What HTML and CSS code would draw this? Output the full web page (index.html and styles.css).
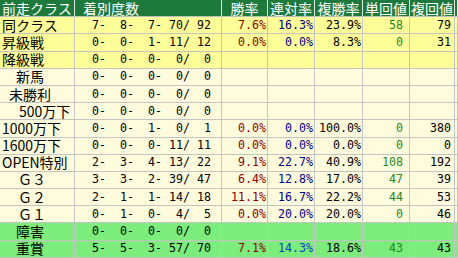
FILE: index.html
```html
<!DOCTYPE html>
<html lang="ja">
<head>
<meta charset="utf-8">
<link rel="stylesheet" href="styles.css">
</head>
<body>
<div class="sheet">
  <div class="row head">
    <div class="c lab">前走クラス</div>
    <div class="c hd-left">着別度数</div>
    <div class="c hd">勝率</div>
    <div class="c hd">連対率</div>
    <div class="c hd">複勝率</div>
    <div class="c hd">単回値</div>
    <div class="c hd">複回値</div>
    <div class="c"></div>
  </div>

  <div class="row yellow">
    <div class="c lab">同クラス</div>
    <div class="c num rec">  7-  8-  7- 70/ 92</div>
    <div class="c num win">7.6%</div>
    <div class="c num ren">16.3%</div>
    <div class="c num fuku">23.9%</div>
    <div class="c num tan">58</div>
    <div class="c num fk">79</div>
    <div class="c"></div>
  </div>
  <div class="row yellow">
    <div class="c lab">昇級戦</div>
    <div class="c num rec">  0-  0-  1- 11/ 12</div>
    <div class="c num win">0.0%</div>
    <div class="c num ren">0.0%</div>
    <div class="c num fuku">8.3%</div>
    <div class="c num tan">0</div>
    <div class="c num fk">31</div>
    <div class="c"></div>
  </div>
  <div class="row yellow">
    <div class="c lab">降級戦</div>
    <div class="c num rec">  0-  0-  0-  0/  0</div>
    <div class="c"></div><div class="c"></div><div class="c"></div><div class="c"></div><div class="c"></div><div class="c"></div>
  </div>

  <div class="row cream">
    <div class="c lab in-full">新馬</div>
    <div class="c num rec">  0-  0-  0-  0/  0</div>
    <div class="c"></div><div class="c"></div><div class="c"></div><div class="c"></div><div class="c"></div><div class="c"></div>
  </div>
  <div class="row cream">
    <div class="c lab in-half">未勝利</div>
    <div class="c num rec">  0-  0-  0-  0/  0</div>
    <div class="c"></div><div class="c"></div><div class="c"></div><div class="c"></div><div class="c"></div><div class="c"></div>
  </div>
  <div class="row cream">
    <div class="c lab in-500">500万下</div>
    <div class="c num rec">  0-  0-  0-  0/  0</div>
    <div class="c"></div><div class="c"></div><div class="c"></div><div class="c"></div><div class="c"></div><div class="c"></div>
  </div>
  <div class="row cream">
    <div class="c lab">1000万下</div>
    <div class="c num rec">  0-  0-  1-  0/  1</div>
    <div class="c num win">0.0%</div>
    <div class="c num ren">0.0%</div>
    <div class="c num fuku">100.0%</div>
    <div class="c num tan">0</div>
    <div class="c num fk">380</div>
    <div class="c"></div>
  </div>
  <div class="row cream">
    <div class="c lab">1600万下</div>
    <div class="c num rec">  0-  0-  0- 11/ 11</div>
    <div class="c num win">0.0%</div>
    <div class="c num ren">0.0%</div>
    <div class="c num fuku">0.0%</div>
    <div class="c num tan">0</div>
    <div class="c num fk">0</div>
    <div class="c"></div>
  </div>
  <div class="row cream">
    <div class="c lab">OPEN特別</div>
    <div class="c num rec">  2-  3-  4- 13/ 22</div>
    <div class="c num win">9.1%</div>
    <div class="c num ren">22.7%</div>
    <div class="c num fuku">40.9%</div>
    <div class="c num tan">108</div>
    <div class="c num fk">192</div>
    <div class="c"></div>
  </div>
  <div class="row cream">
    <div class="c lab in-g">Ｇ３</div>
    <div class="c num rec">  3-  3-  2- 39/ 47</div>
    <div class="c num win">6.4%</div>
    <div class="c num ren">12.8%</div>
    <div class="c num fuku">17.0%</div>
    <div class="c num tan">47</div>
    <div class="c num fk">39</div>
    <div class="c"></div>
  </div>
  <div class="row cream">
    <div class="c lab in-g">Ｇ２</div>
    <div class="c num rec">  2-  1-  1- 14/ 18</div>
    <div class="c num win">11.1%</div>
    <div class="c num ren">16.7%</div>
    <div class="c num fuku">22.2%</div>
    <div class="c num tan">44</div>
    <div class="c num fk">53</div>
    <div class="c"></div>
  </div>
  <div class="row cream">
    <div class="c lab in-g">Ｇ１</div>
    <div class="c num rec">  0-  1-  0-  4/  5</div>
    <div class="c num win">0.0%</div>
    <div class="c num ren">20.0%</div>
    <div class="c num fuku">20.0%</div>
    <div class="c num tan">0</div>
    <div class="c num fk">46</div>
    <div class="c"></div>
  </div>

  <div class="row green">
    <div class="c lab in-full">障害</div>
    <div class="c num rec">  0-  0-  0-  0/  0</div>
    <div class="c"></div><div class="c"></div><div class="c"></div><div class="c"></div><div class="c"></div><div class="c"></div>
  </div>
  <div class="row green">
    <div class="c lab in-full">重賞</div>
    <div class="c num rec">  5-  5-  3- 57/ 70</div>
    <div class="c num win">7.1%</div>
    <div class="c num ren ren-bright">14.3%</div>
    <div class="c num fuku">18.6%</div>
    <div class="c num tan">43</div>
    <div class="c num fk">43</div>
    <div class="c"></div>
  </div>
</div>
</body>
</html>
```

FILE: styles.css
```css
html, body {
  margin: 0;
  padding: 0;
  background: #ffffff;
}

.sheet {
  display: grid;
  grid-template-columns: 75px 147px 46px 47px 48px 47px 45px 3px;
  grid-template-rows: repeat(15, 17.2px);
  width: 458px;
  height: 258px;
  overflow: hidden;
  font-family: "Noto Sans CJK JP", "DejaVu Sans", sans-serif;
  font-size: 14px;
  color: #000000;
}

.row {
  display: contents;
}

.c {
  box-sizing: border-box;
  border-right: 1px solid #c4c4c4;
  border-bottom: 1px solid #c4c4c4;
  display: flex;
  align-items: center;
  line-height: 15px;
  white-space: pre;
  min-width: 0;
}

.head > .c {
  background: #1e7a3c;
  color: #ffffff;
  border-right-color: #dfe9e1;
  border-bottom-color: #b8c4bb;
}

.yellow > .c { background: #ffff99; }
.cream > .c { background: #fffbdd; }
.green > .c { background: #7cec7c; }

.lab { padding-left: 2px; }
.in-full { padding-left: 16px; }
.in-half { padding-left: 9px; }
.in-500 { padding-left: 19px; }
.in-g { padding-left: 18px; }

.hd { justify-content: center; }
.hd-left { padding-left: 8px; }

.num {
  justify-content: flex-end;
  font-family: "DejaVu Sans Mono", "Liberation Mono", monospace;
  font-size: 11.63px;
}

.rec { padding-right: 10px; }
.win { padding-right: 1px; color: #8a0000; }
.ren { padding-right: 1px; color: #000088; }
.ren-bright { color: #0a3cc8; }
.fuku { padding-right: 1px; }
.tan { padding-right: 6px; color: #1d8a1d; }
.fk { padding-right: 3px; }
```
